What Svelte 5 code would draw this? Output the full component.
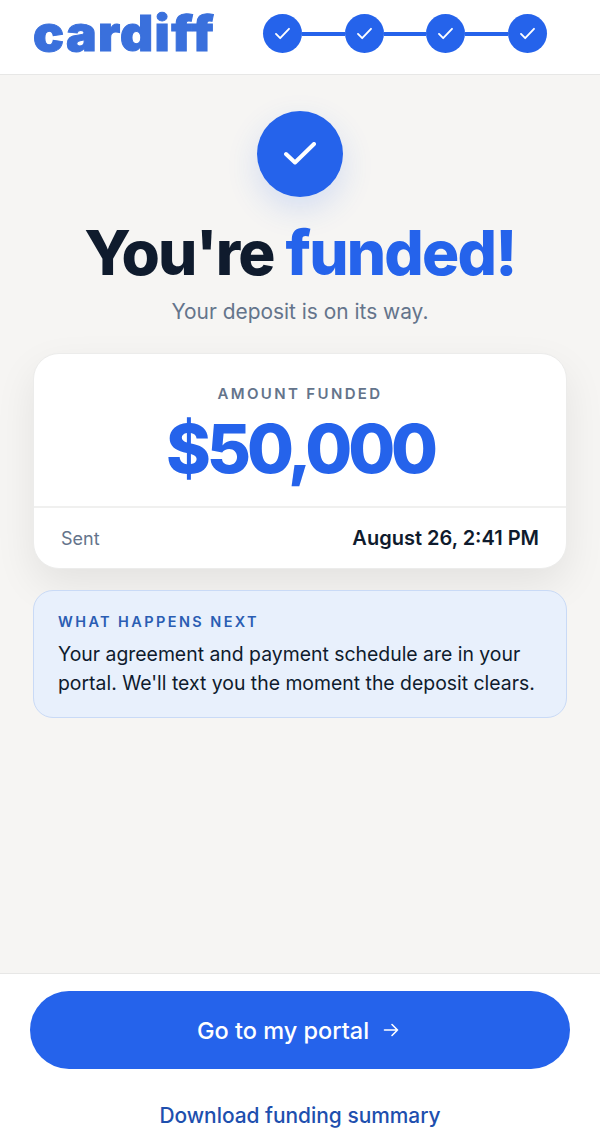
<script>
  const steps = [1, 2, 3, 4];
</script>

<div class="page">
  <header class="top">
    <div class="logo">cardiff</div>
    <div class="steps">
      {#each steps as s, i}
        {#if i > 0}<span class="line"></span>{/if}
        <span class="dot">
          <svg viewBox="0 0 16 14" width="15" height="13" fill="none" stroke="#fff" stroke-width="2" stroke-linecap="round" stroke-linejoin="round"><path d="M1 7.500l4.500 4.500L15 2"/></svg>
        </span>
      {/each}
    </div>
  </header>

  <main class="main">
    <div class="badge">
      <svg viewBox="0 0 32 24" width="32" height="24" fill="none" stroke="#fff" stroke-width="4" stroke-linecap="round" stroke-linejoin="round"><path d="M2 12l9 8.500L30 2"/></svg>
    </div>
    <h1 class="title">You're <span>funded!</span></h1>
    <p class="sub">Your deposit is on its way.</p>

    <section class="card">
      <div class="card-top">
        <div class="label">AMOUNT FUNDED</div>
        <div class="amount">$50,000</div>
      </div>
      <div class="card-row">
        <span class="sent">Sent</span>
        <span class="date">August 26, 2:41 PM</span>
      </div>
    </section>

    <section class="next">
      <div class="next-h">WHAT HAPPENS NEXT</div>
      <p class="next-p">Your agreement and payment schedule are in your portal. We'll text you the moment the deposit clears.</p>
    </section>
  </main>

  <footer class="foot">
    <button class="cta">
      <span>Go to my portal</span>
      <svg viewBox="0 0 16 16" width="16" height="16" fill="none" stroke="#fff" stroke-width="1.6" stroke-linecap="round" stroke-linejoin="round"><path d="M1.500 8h13M9 2.500L14.500 8 9 13.500"/></svg>
    </button>
    <a class="dl" href="#summary">Download funding summary</a>
  </footer>
</div>

<style>
  :global(body) { margin: 0; background: #f6f5f3; }
  .page {
    width: 600px; height: 1137px; display: flex; flex-direction: column;
    font-family: Inter, "Liberation Sans", sans-serif; background: #f6f5f3; overflow: hidden;
  }
  .top {
    height: 74px; background: #fff; border-bottom: 1px solid #e7e7e6;
    display: flex; align-items: center; justify-content: space-between;
    padding: 0 53px 0 33px; flex: none;
  }
  .logo {
    font-family: Inter, sans-serif; font-weight: 900; font-size: 49px; line-height: 1;
    color: #3a70dc; letter-spacing: 1.3px; -webkit-text-stroke: 1px #3a70dc; margin-top: -7px;
    transform: scaleX(1.05); transform-origin: left center;
  }
  .steps { width: 284px; display: flex; align-items: center; margin-top: -7px; }
  .dot {
    width: 39px; height: 39px; border-radius: 50%; background: #2563eb; flex: none;
    display: flex; align-items: center; justify-content: center;
  }
  .line { flex: 1; height: 4px; background: #2563eb; }
  .main {
    flex: 1; display: flex; flex-direction: column; align-items: center; padding: 36px 33px 0;
  }
  .badge {
    width: 86px; height: 86px; border-radius: 50%; background: #2563eb; flex: none;
    display: flex; align-items: center; justify-content: center;
    box-shadow: 0 12px 32px rgba(37, 99, 235, 0.16);
  }
  .title {
    margin: 20px 0 0; font-size: 62px; line-height: 72px; font-weight: 800; letter-spacing: -1.8px;
    color: #0f1b2d; white-space: nowrap;
  }
  .title span { color: #2563eb; }
  .sub { margin: 8px 0 0; font-size: 20.9px; line-height: 30px; color: #64748b; }
  .card {
    width: 100%; box-sizing: border-box; margin-top: 26px; background: #fff; border-radius: 26px;
    border: 1px solid #ececeb; box-shadow: 0 16px 40px rgba(0, 0, 0, 0.08);
  }
  .card-top { height: 152px; box-sizing: border-box; padding-top: 30px; text-align: center; }
  .label { font-size: 15px; line-height: 20px; font-weight: 600; letter-spacing: 2.35px; color: #64748b; }
  .amount { font-size: 68px; line-height: 82px; font-weight: 800; letter-spacing: -4.2px; color: #2563eb; margin-top: 3px; }
  .card-row {
    border-top: 2px solid #f0f0ef; height: 60px; padding: 0 27px;
    display: flex; align-items: center; justify-content: space-between;
  }
  .sent { font-size: 18px; color: #64748b; }
  .date { font-size: 20px; font-weight: 600; color: #0f1b2d; }
  .next {
    width: 100%; box-sizing: border-box; margin-top: 21px; height: 128px; padding: 21px 24px 0;
    background: #e8f0fc; border: 1px solid #c9daf6; border-radius: 20px;
  }
  .next-h { font-size: 14.500px; line-height: 20px; font-weight: 600; letter-spacing: 2.4px; color: #2a5db3; }
  .next-p { margin: 8px 0 0; font-size: 19.400px; line-height: 29px; color: #0f1b2d; }
  .foot {
    flex: none; height: 164px; box-sizing: border-box; background: #fff; border-top: 1px solid #e7e7e6;
    padding: 17px 30px 0; display: flex; flex-direction: column; align-items: center;
  }
  .cta {
    width: 100%; height: 78px; border: 0; border-radius: 39px; background: #2563eb; color: #fff;
    font-family: inherit; font-size: 23.500px; font-weight: 550; flex: none; padding: 0 4px 0 0;
    display: flex; align-items: center; justify-content: center; gap: 14px;
  }
  .dl {
    margin-top: 33px; font-size: 20.900px; line-height: 28px; font-weight: 500; color: #1e4fae; text-decoration: none;
  }
</style>
